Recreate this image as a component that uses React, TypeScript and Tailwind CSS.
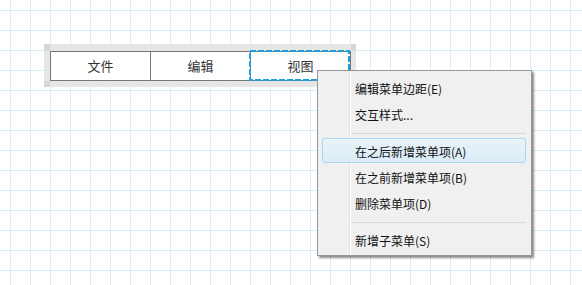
const items: { label: string; active?: boolean }[][] = [
  [{ label: "编辑菜单边距(E)" }, { label: "交互样式..." }],
  [
    { label: "在之后新增菜单项(A)", active: true },
    { label: "在之前新增菜单项(B)" },
    { label: "删除菜单项(D)" },
  ],
  [{ label: "新增子菜单(S)" }],
]

function Toolbar() {
  return (
    <div className="relative inline-flex bg-[#e6e6e6] pl-[6px] pr-[5px] pt-[7px] pb-[6px]">
      <span className="absolute left-0 top-0 w-[6px] h-[7px] bg-[#d6d6d6]" />
      <span className="absolute left-0 bottom-0 w-[6px] h-[6px] bg-[#d6d6d6]" />
      <span className="absolute right-0 top-0 w-[5px] h-[7px] bg-[#d6d6d6]" />
      <span className="absolute right-0 bottom-0 w-[5px] h-[6px] bg-[#d6d6d6]" />
      <div className="flex h-[30px] border border-[#777] bg-white text-[13px] text-[#333]">
        <div className="w-[100px] border-r border-[#777] flex items-center justify-center">文件</div>
        <div className="w-[100px] border-r border-[#777] flex items-center justify-center">编辑</div>
        <div className="relative w-[99px] flex items-center justify-center">
          视图
          <svg className="absolute left-[-2px] top-[-2px]" width="101" height="31">
            <rect x="1" y="1" width="99" height="29" fill="none" stroke="#1e9fde" strokeWidth="2" strokeDasharray="6 2" />
          </svg>
        </div>
      </div>
    </div>
  )
}

function ContextMenu() {
  return (
    <div className="absolute left-[317px] top-[70px] w-[215px] border border-[#979797] bg-[#f0f0f0] pt-[5px] pb-[1px] shadow-[2px_2px_2px_rgba(0,0,0,0.45)]">
      <div className="absolute left-[31px] top-0 bottom-0 w-[1px] bg-[#e2e2e2] border-r border-white box-content" />
      {items.map((group, gi) => (
        <div key={gi}>
          {gi > 0 && (
            <div className="h-[11px] flex items-center pl-[33px] pr-[5px]">
              <div className="w-full h-[1px] bg-[#d9d9d9]" />
            </div>
          )}
          {group.map((it) => (
            <div key={it.label} className="relative h-[26px] flex items-center">
              {it.active && (
                <div className="absolute left-[4px] right-[5px] top-[-1px] h-[25px] rounded-[3px] border border-[#a9d6ee] bg-[linear-gradient(to_bottom,#e8f3fa,#dcecf7)]" />
              )}
              <span className="relative pl-[37px] text-[12px] text-[#111]">{it.label}</span>
            </div>
          ))}
        </div>
      ))}
    </div>
  )
}

export default function App() {
  return (
    <div className="relative w-[582px] h-[285px] overflow-hidden bg-white bg-[linear-gradient(to_right,#d6eef9_1px,transparent_1px),linear-gradient(to_bottom,#d6eef9_1px,transparent_1px)] bg-[size:20px_20px] bg-[position:10px_10px] font-['Noto_Sans_CJK_SC',sans-serif]">
      <div className="pl-[44px] pt-[44px]">
        <Toolbar />
      </div>
      <ContextMenu />
    </div>
  )
}
